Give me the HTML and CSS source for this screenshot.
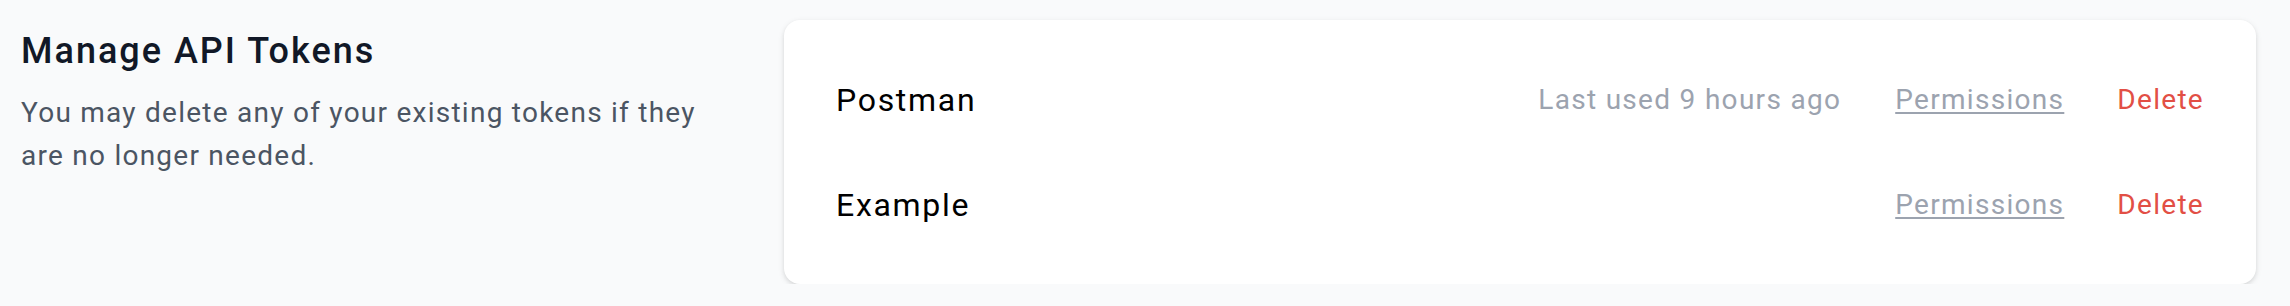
FILE: index.html
```html
<!DOCTYPE html>
<html lang="en">
<head>
<meta charset="utf-8">
<title>Manage API Tokens</title>
<link rel="stylesheet" href="styles.css">
</head>
<body>
<div class="section">
  <div class="section-title">
    <h3 class="title">Manage API Tokens</h3>
    <p class="description">You may delete any of your existing tokens if they are no longer needed.</p>
  </div>
  <div class="section-content">
    <div class="card">
      <div class="token-row">
        <div class="token-name">Postman</div>
        <div class="token-actions">
          <div class="last-used">Last used 9 hours ago</div>
          <button class="link-btn permissions">Permissions</button>
          <button class="link-btn delete">Delete</button>
        </div>
      </div>
      <div class="token-row">
        <div class="token-name">Example</div>
        <div class="token-actions">
          <button class="link-btn permissions">Permissions</button>
          <button class="link-btn delete">Delete</button>
        </div>
      </div>
    </div>
  </div>
</div>
</body>
</html>
```

FILE: styles.css
```css
html, body {
  margin: 0;
  padding: 0;
  background: #f9fafb;
  font-family: Roboto, "Liberation Sans", sans-serif;
}

.section {
  display: grid;
  grid-template-columns: repeat(3, minmax(0, 1fr));
  column-gap: 54px;
  padding: 20px 34px 0 21px;
}

.section-title {
  grid-column: span 1;
}

.title {
  margin: 0;
  font-size: 36px;
  line-height: 63px;
  font-weight: 500;
  letter-spacing: 2px;
  color: #111827;
}

.description {
  margin: 8px 0 0;
  font-size: 28px;
  line-height: 43px;
  letter-spacing: 1.25px;
  color: #4b5563;
}

.section-content {
  grid-column: span 2;
}

.card {
  background: #ffffff;
  border-radius: 16px;
  box-shadow: 0 2px 6px rgba(0, 0, 0, 0.1), 0 2px 4px rgba(0, 0, 0, 0.06);
  padding: 50px 52px 49px;
  display: flex;
  flex-direction: column;
  gap: 45px;
}

.token-row {
  display: flex;
  align-items: center;
  justify-content: space-between;
  min-height: 60px;
}

.token-name {
  font-size: 32px;
  line-height: 48px;
  letter-spacing: 1.7px;
  color: #000000;
}

.token-actions {
  display: flex;
  align-items: center;
}

.last-used {
  font-size: 28px;
  line-height: 40px;
  letter-spacing: 1.3px;
  color: #9ca3af;
}

.link-btn {
  background: none;
  border: 0;
  padding: 0;
  margin: 0 0 0 54px;
  font-family: inherit;
  font-size: 28px;
  line-height: 40px;
  letter-spacing: 1.3px;
  cursor: pointer;
}

.link-btn.delete {
  margin-left: 53px;
}

.permissions {
  color: #9ca3af;
  text-decoration: underline;
  text-decoration-thickness: 2px;
  text-underline-offset: 3px;
}

.delete {
  color: #e24f45;
}
```
